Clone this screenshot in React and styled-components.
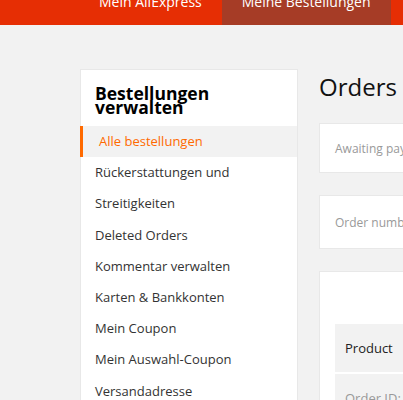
import React from "react";
import styled, { createGlobalStyle } from "styled-components";

const GlobalStyle = createGlobalStyle`
  html, body {
    margin: 0;
    padding: 0;
    background: #f2f2f2;
    overflow: hidden;
  }
  body {
    font-family: "Open Sans", "Liberation Sans", sans-serif;
    color: #333;
  }
`;

const Header = styled.div`
  height: 25px;
  background: #e62e04;
  overflow: hidden;
`;

const Nav = styled.div`
  display: flex;
  width: 1000px;
  padding-left: 79px;
`;

const NavItem = styled.div`
  height: 25px;
  padding: 0 20px;
  background: ${(p) => (p.active ? "#a63c26" : "transparent")};
  color: #fff;
  font-size: 14px;
  line-height: 14px;
  white-space: nowrap;
`;

const NavLabel = styled.span`
  display: block;
  margin-top: -5px;
`;

const Page = styled.div`
  display: flex;
  gap: 21px;
  width: 1200px;
  padding: 44px 0 0 80px;
  align-items: flex-start;
`;

const Sidebar = styled.div`
  width: 218px;
  flex-shrink: 0;
  box-sizing: border-box;
  background: #fff;
  border: 1px solid #e8e8e8;
  padding-bottom: 20px;
`;

const SideTitle = styled.h2`
  margin: 0;
  padding: 16px 14px 12px;
  font-size: 17.5px;
  font-weight: 700;
  line-height: 14px;
  color: #000;
`;

const Menu = styled.div`
  display: flex;
  flex-direction: column;
`;

const MenuItem = styled.div`
  margin-left: -1px;
  padding: 0 14px 0 ${(p) => (p.active ? "16px" : "15px")};
  border-left: ${(p) => (p.active ? "3px solid #ff6a00" : "none")};
  background: ${(p) => (p.active ? "#f2f2f2" : "transparent")};
  color: ${(p) => (p.active ? "#ff6a00" : "#333")};
  font-size: 13px;
  line-height: 31.2px;
`;

const Main = styled.div`
  flex: 1;
  padding-top: 2px;
`;

const Title = styled.h1`
  margin: 0 0 20px;
  font-size: 24px;
  font-weight: 400;
  line-height: 32px;
  color: #111;
`;

const Card = styled.div`
  box-sizing: border-box;
  background: #fff;
  border: 1px solid #e8e8e8;
  height: ${(p) => p.h}px;
  padding: 0 15px;
  display: flex;
  align-items: center;
  color: #999;
  font-size: 12px;
  white-space: nowrap;
  margin-bottom: 22px;
`;

const ListCard = styled.div`
  background: #fff;
  border: 1px solid #e8e8e8;
  padding: 52px 15px 20px;
`;

const Row = styled.div`
  background: #f2f2f2;
  height: 48px;
  padding: 0 10px;
  display: flex;
  align-items: center;
  font-size: 13px;
  color: ${(p) => (p.muted ? "#999" : "#222")};
  margin-bottom: 2px;
`;

const menu = [
  "Rückerstattungen und Streitigkeiten",
  "Deleted Orders",
  "Kommentar verwalten",
  "Karten & Bankkonten",
  "Mein Coupon",
  "Mein Auswahl-Coupon",
  "Versandadresse",
  "Mein Konto",
];

export default function App() {
  return (
    <>
      <GlobalStyle />
      <Header>
        <Nav>
          <NavItem>
            <NavLabel>Mein AliExpress</NavLabel>
          </NavItem>
          <NavItem active>
            <NavLabel>Meine Bestellungen</NavLabel>
          </NavItem>
        </Nav>
      </Header>
      <Page>
        <Sidebar>
          <SideTitle>Bestellungen verwalten</SideTitle>
          <Menu>
            <MenuItem active>Alle bestellungen</MenuItem>
            {menu.map((m) => (
              <MenuItem key={m}>{m}</MenuItem>
            ))}
          </Menu>
        </Sidebar>
        <Main>
          <Title>Orders</Title>
          <Card h={50}>Awaiting payment (0) Awaiting shipment (0)</Card>
          <Card h={54}>Order number: Product: Order date:</Card>
          <ListCard>
            <Row>Product</Row>
            <Row muted>Order ID: 8123456789012345</Row>
          </ListCard>
        </Main>
      </Page>
    </>
  );
}
